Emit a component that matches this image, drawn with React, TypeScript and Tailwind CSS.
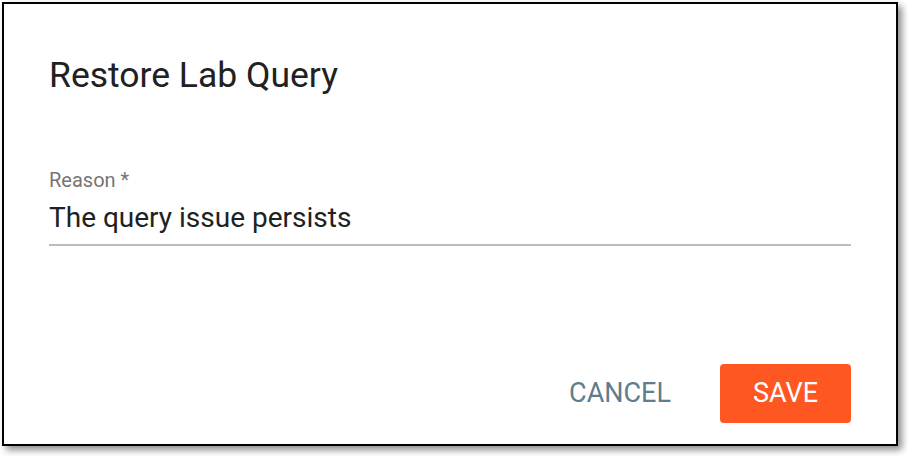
import React from 'react';

const font = { fontFamily: 'Roboto, "Liberation Sans", Arial, sans-serif' };

const App: React.FC = () => {
  return (
    <div className="w-[908px] h-[456px] bg-white pl-[2px] pt-[2px]" style={font}>
      {/* Dialog */}
      <div className="w-[896px] h-[444px] bg-white border-2 border-black shadow-[4px_4px_7px_rgba(0,0,0,0.45)] flex flex-col px-[45px] pt-[49px] pb-[21px]">
        <h2 className="text-[35.5px] leading-[44px] font-normal text-[#212121]">Restore Lab Query</h2>

        {/* Reason field */}
        <div className="mt-[71px] flex flex-col">
          <label className="text-[20px] leading-[24px] text-[#757575]">Reason *</label>
          <div className="mt-[10px] pb-[10px] border-b-2 border-[#bdbdbd] text-[28px] leading-[32px] text-[#212121]">
            The query issue persists
          </div>
        </div>

        <div className="flex-1" />

        {/* Actions */}
        <div className="flex justify-end items-center gap-[33px]">
          <button className="h-[59px] px-[16px] text-[27px] text-[#607d8b] uppercase">
            Cancel
          </button>
          <button className="h-[59px] w-[131px] rounded-[4px] bg-[#ff5722] text-[27px] text-white uppercase">
            Save
          </button>
        </div>
      </div>
    </div>
  );
};

export default App;
